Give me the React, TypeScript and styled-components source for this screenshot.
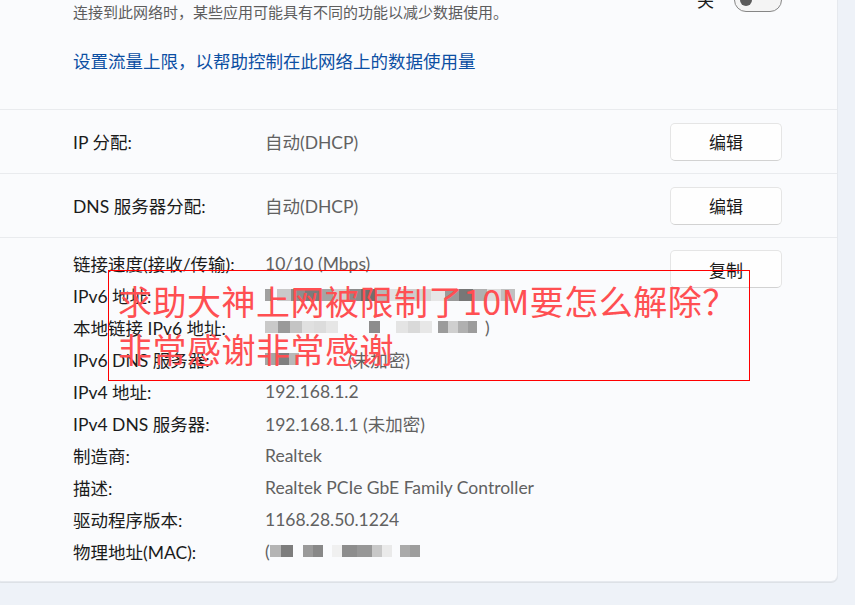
import React from "react";
import styled, { createGlobalStyle } from "styled-components";

const GlobalStyle = createGlobalStyle`
  html, body {
    margin: 0;
    padding: 0;
    background: #eef2f8;
  }
  body {
    font-family: "Segoe UI", Lato, "Noto Sans CJK SC", sans-serif;
    -webkit-font-smoothing: antialiased;
  }
`;

const Page = styled.div`
  position: relative;
  width: 855px;
  height: 605px;
  overflow: hidden;
  background: #eef2f8;
`;

const Card = styled.section`
  margin: -20px 18px 0 -4px;
  background: #fafbfd;
  border-radius: 6px;
  box-shadow: 0 0 0 1px #e6e9ee, 0 1px 0 1px #dde1e6;
  color: #1b1b1b;
  font-size: 17.5px;
`;

const TopSection = styled.div`
  padding: 22px 55px 35px 77px;
`;

const MeteredRow = styled.div`
  display: flex;
  justify-content: space-between;
  align-items: flex-start;
`;

const Caption = styled.div`
  font-size: 15px;
  line-height: 20px;
  color: #5d5d5d;
`;

const ToggleWrap = styled.div`
  display: flex;
  align-items: center;
  gap: 20px;
  margin-top: -15px;
  font-size: 17px;
`;

const Switch = styled.div`
  position: relative;
  width: 48px;
  height: 24px;
  box-sizing: border-box;
  border: 1px solid #868686;
  border-radius: 12px;
  background: #f4f4f4;

  &::after {
    content: "";
    position: absolute;
    left: 5px;
    top: 5px;
    width: 12px;
    height: 12px;
    border-radius: 50%;
    background: #5b5b5b;
  }
`;

const LimitLink = styled.a`
  display: block;
  margin-top: 28px;
  line-height: 24px;
  color: #0c4fa3;
  text-decoration: none;
  cursor: pointer;
`;

const EditRow = styled.div`
  display: grid;
  grid-template-columns: 192px 1fr auto;
  align-items: center;
  min-height: 63px;
  padding: 0 55px 0 77px;
  border-top: 1px solid #e9ebee;
`;

const Value = styled.span`
  color: #616161;
  white-space: nowrap;
`;

const Button = styled.button<{ $top?: number }>`
  width: 112px;
  height: 38px;
  margin-top: ${(p) => p.$top ?? 0}px;
  font: inherit;
  font-size: 17px;
  color: #1b1b1b;
  background: #fefefe;
  border: 1px solid #e5e5e5;
  border-bottom-color: #d2d2d2;
  border-radius: 5px;
  cursor: pointer;
`;

const DetailSection = styled.div`
  display: flex;
  align-items: flex-start;
  padding: 9px 55px 14px 77px;
  border-top: 1px solid #e9ebee;
`;

const DetailList = styled.dl`
  flex: 1;
  margin: 0;
  display: grid;
  grid-template-columns: 192px 1fr;
  grid-auto-rows: 32px;
  align-items: center;
`;

const Term = styled.dt`
  white-space: nowrap;
`;

const Detail = styled.dd`
  margin: 0;
  display: flex;
  align-items: center;
  color: #616161;
  white-space: nowrap;
`;

const Mosaic = styled.span`
  display: inline-flex;
  height: 12px;
  filter: blur(0.5px);
`;

const Cell = styled.span<{ $w: number; $c: string }>`
  width: ${(p) => p.$w}px;
  height: 100%;
  background: ${(p) => p.$c};
`;

const Note = styled.div`
  position: absolute;
  left: 108px;
  top: 270px;
  width: 642px;
  height: 111px;
  box-sizing: border-box;
  border: 1px solid #ff0000;
  padding: 6px 0 0 9px;
  font-family: "Noto Sans CJK SC", sans-serif;
  font-size: 34px;
  line-height: 48px;
  letter-spacing: 0.5px;
  color: #ff4f52;
  white-space: nowrap;
  pointer-events: none;
`;

type Block = [number, string];

const hidden = (blocks: Block[]) => (
  <Mosaic>
    {blocks.map(([w, c], i) => (
      <Cell key={i} $w={w} $c={c} />
    ))}
  </Mosaic>
);

const ipv6: Block[] = [
  [6, "#a0a0a0"], [6, "transparent"], [14, "#c9c9c9"], [14, "#8e8e8e"],
  [14, "#7b7b7b"], [14, "#a4a4a4"], [14, "#cfcfcf"], [14, "#8c8c8c"],
  [14, "#6f6f6f"], [14, "#b7b7b7"], [14, "#e1e1e1"], [14, "#cdcdcd"],
  [14, "#d6d6d6"], [14, "#e6e6e6"], [14, "#9a9a9a"], [14, "#777777"],
  [14, "#b0b0b0"], [14, "#dcdcdc"], [14, "#c0c0c0"],
];

const linkLocal: Block[] = [
  [13, "#c9c9c9"], [12, "#9a9a9a"], [12, "#c4c4c4"], [12, "#e0e0e0"],
  [12, "#dcdcdc"], [12, "#e6e6e6"], [31, "transparent"], [11, "#8d8d8d"],
  [16, "transparent"], [12, "#e4e4e4"], [12, "#d9d9d9"], [12, "#e7e7e7"],
  [6, "transparent"], [10, "#9b9b9b"], [10, "#cfcfcf"], [10, "#b0b0b0"],
  [9, "#9c9c9c"],
];

const dns6: Block[] = [
  [12, "#a5a5a5"], [12, "#7f7f7f"], [10, "#b8b8b8"],
];

const mac: Block[] = [
  [11, "#b4b4b4"], [12, "#7d7d7d"], [10, "transparent"], [10, "#9a9a9a"],
  [10, "#888888"], [9, "transparent"], [10, "#f0f0f0"], [15, "#8d8d8d"],
  [15, "#979797"], [10, "#c8c8c8"], [10, "#eaeaea"], [8, "transparent"],
  [10, "#aaaaaa"], [10, "#9d9d9d"],
];

const details: { label: string; value: React.ReactNode }[] = [
  { label: "链接速度(接收/传输):", value: "10/10 (Mbps)" },
  { label: "IPv6 地址:", value: hidden(ipv6) },
  {
    label: "本地链接 IPv6 地址:",
    value: (
      <>
        {hidden(linkLocal)}
        <span style={{ marginLeft: 8 }}>)</span>
      </>
    ),
  },
  {
    label: "IPv6 DNS 服务器:",
    value: (
      <>
        {hidden(dns6)}
        <span style={{ marginLeft: 49 }}>(未加密)</span>
      </>
    ),
  },
  { label: "IPv4 地址:", value: "192.168.1.2" },
  { label: "IPv4 DNS 服务器:", value: "192.168.1.1 (未加密)" },
  { label: "制造商:", value: "Realtek" },
  { label: "描述:", value: "Realtek PCIe GbE Family Controller" },
  { label: "驱动程序版本:", value: "1168.28.50.1224" },
  {
    label: "物理地址(MAC):",
    value: (
      <>
        <span>(</span>
        {hidden(mac)}
      </>
    ),
  },
];

const App: React.FC = () => {
  return (
    <Page>
      <GlobalStyle />
      <Card>
        <TopSection>
          <MeteredRow>
            <Caption>连接到此网络时，某些应用可能具有不同的功能以减少数据使用。</Caption>
            <ToggleWrap>
              <span>关</span>
              <Switch />
            </ToggleWrap>
          </MeteredRow>
          <LimitLink>设置流量上限，以帮助控制在此网络上的数据使用量</LimitLink>
        </TopSection>

        <EditRow>
          <span>IP 分配:</span>
          <Value>自动(DHCP)</Value>
          <Button>编辑</Button>
        </EditRow>
        <EditRow>
          <span>DNS 服务器分配:</span>
          <Value>自动(DHCP)</Value>
          <Button>编辑</Button>
        </EditRow>

        <DetailSection>
          <DetailList>
            {details.map((d) => (
              <React.Fragment key={d.label}>
                <Term>{d.label}</Term>
                <Detail>{d.value}</Detail>
              </React.Fragment>
            ))}
          </DetailList>
          <Button $top={3}>复制</Button>
        </DetailSection>
      </Card>

      <Note>
        <div>求助大神上网被限制了10M要怎么解除？</div>
        <div>非常感谢非常感谢</div>
      </Note>
    </Page>
  );
};

export default App;
